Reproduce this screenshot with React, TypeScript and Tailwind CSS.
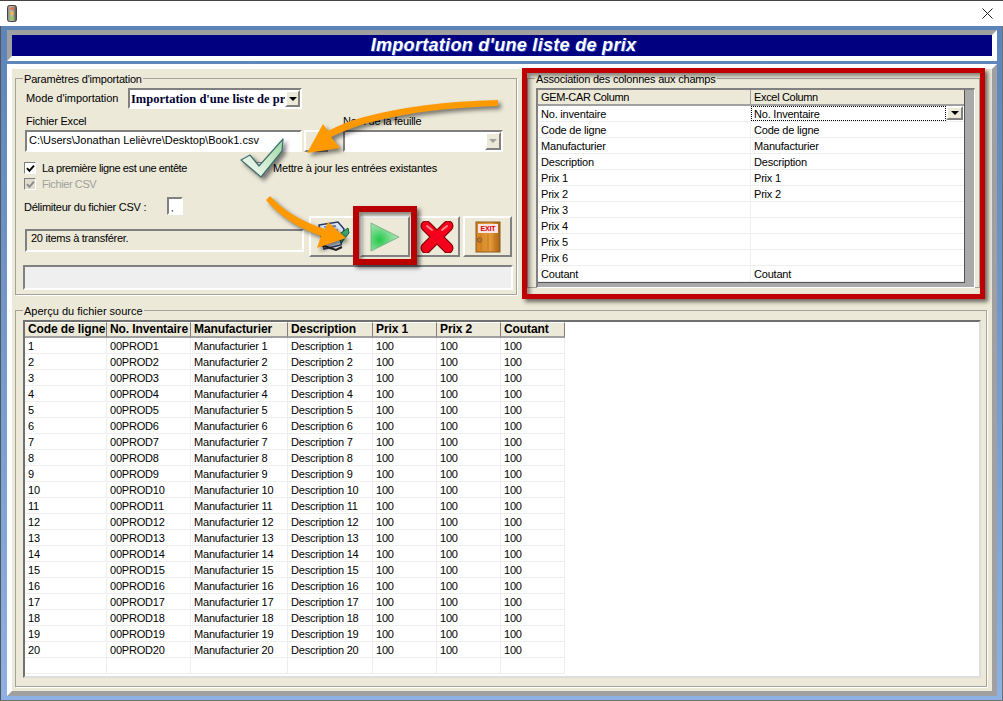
import React from "react";

const sunken = "border-2 border-t-[#808080] border-l-[#808080] border-r-white border-b-white";
const raised = "border-2 border-t-white border-l-white border-r-[#808080] border-b-[#808080]";

function Legend({ children, left }: { children: React.ReactNode; left: string }) {
  return <span className={`absolute -top-[7px] bg-[#ece9d8] px-[1px] leading-[14px] ${left}`}>{children}</span>;
}

function Check({ disabled }: { disabled?: boolean }) {
  return (
    <span className={`flex h-[12px] w-[12px] shrink-0 items-center justify-center border border-t-[#808080] border-l-[#808080] border-r-white border-b-white ${disabled ? "bg-[#e0ddd0]" : "bg-white"}`}>
      <svg width="9" height="9" viewBox="0 0 9 9">
        <path d="M1 4.2 L3.4 6.8 L8 1.6" fill="none" stroke={disabled ? "#8a8a8a" : "#000"} strokeWidth="1.9" />
      </svg>
    </span>
  );
}

function DropBtn({ disabled, cls }: { disabled?: boolean; cls: string }) {
  return (
    <span className={`flex shrink-0 items-center justify-center bg-[#ece9d8] ${raised} ${cls}`}>
      <svg width="8" height="4" viewBox="0 0 8 4"><path d="M0 0H8L4 4Z" fill={disabled ? "#a0a0a0" : "#000"} /></svg>
    </span>
  );
}

function IconBtn({ w, children }: { w: string; children?: React.ReactNode }) {
  return <div className={`flex h-[41px] shrink-0 items-center justify-center bg-[#ece9d8] ${raised} ${w}`}>{children}</div>;
}

const mapping = [
  ["No. inventaire", "No. Inventaire"],
  ["Code de ligne", "Code de ligne"],
  ["Manufacturier", "Manufacturier"],
  ["Description", "Description"],
  ["Prix 1", "Prix 1"],
  ["Prix 2", "Prix 2"],
  ["Prix 3", ""],
  ["Prix 4", ""],
  ["Prix 5", ""],
  ["Prix 6", ""],
  ["Coutant", "Coutant"],
];

const headers = ["Code de ligne", "No. Inventaire", "Manufacturier", "Description", "Prix 1", "Prix 2", "Coutant"];
const rows = Array.from({ length: 20 }, (_, i) => {
  const n = i + 1;
  return [`${n}`, `00PROD${n}`, `Manufacturier ${n}`, `Description ${n}`, "100", "100", "100"];
});

export default function App() {
  return (
    <div className="relative flex h-[701px] w-[1003px] flex-col overflow-hidden bg-[#6f6f6f] font-['Liberation_Sans',Arial,sans-serif] text-[11px] leading-[16px] tracking-[-0.2px] text-black">
      {/* title bar */}
      <div className="flex h-[26px] shrink-0 items-center justify-between border-t border-t-[#444] bg-white pl-[7px] pr-[10px]">
        <svg width="10" height="17" viewBox="0 0 10 17">
          <defs>
            <linearGradient id="tl" x1="0" x2="1" y1="0" y2="0">
              <stop offset="0" stopColor="#8a8a7c" />
              <stop offset="0.5" stopColor="#c5c5b8" />
              <stop offset="1" stopColor="#4c4c44" />
            </linearGradient>
          </defs>
          <rect x="0.5" y="0.5" width="9" height="16" rx="2" fill="url(#tl)" stroke="#444" />
          <circle cx="5" cy="3.6" r="1.9" fill="#e8705a" />
          <circle cx="5" cy="8.4" r="1.9" fill="#e6b64c" />
          <circle cx="5" cy="13.2" r="1.9" fill="#8ec85a" />
        </svg>
        <svg width="11" height="11" viewBox="0 0 11 11">
          <path d="M0.5 0.5 L10.5 10.5 M10.5 0.5 L0.5 10.5" stroke="#222" strokeWidth="1" fill="none" />
        </svg>
      </div>

      {/* blue frame */}
      <div className="mr-[1px] flex h-[674px] shrink-0 flex-col border-l border-l-[#555] bg-gradient-to-b from-[#5d84ba] to-[#8db1e4] py-[4px] pl-[6px] pr-[5px]">
        {/* heading */}
        <div className="h-[31px] shrink-0 border-[5px] border-t-[#a0a0a0] border-l-[#a0a0a0] border-r-white border-b-white bg-[#000080]">
          <div className="flex h-full items-center justify-center pb-[2px] pl-[3px] text-[18px] font-bold italic tracking-[0.3px] text-white [text-shadow:1px_1px_0_#3050c0]">
            Importation d'une liste de prix
          </div>
        </div>

        {/* main panel */}
        <div className="mt-[3px] flex h-[632px] shrink-0 flex-col border-[5px] border-t-white border-l-white border-r-[#a0a0a0] border-b-[#a0a0a0] bg-[#ece9d8] pb-[4px] pl-[3px] pr-[5px] pt-[9px]">
          <div className="flex h-[217px] shrink-0 items-start gap-[10px]">
            {/* Paramètres */}
            <div className="relative flex h-[217px] w-[502px] shrink-0 flex-col border border-[#a3a39a] pl-[9px] pt-[9px] shadow-[1px_1px_0_#fff]">
              <Legend left="left-[7px]">Paramètres d'importation</Legend>
              <div className="flex h-[21px] items-center">
                <span className="w-[103px] shrink-0 -translate-y-[1px] pl-[1px] tracking-[-0.05px]">Mode d'importation</span>
                <div className={`flex h-[21px] w-[174px] shrink-0 items-center bg-white pl-[1px] ${sunken}`}>
                  <span className="w-[154px] shrink-0 whitespace-nowrap font-['Liberation_Serif',serif] text-[12.5px] font-bold tracking-normal text-[#000030]">Importation d'une liste de pr</span>
                  <DropBtn cls="h-[17px] w-[15px]" />
                </div>
              </div>
              <div className="mt-[5px] flex h-[14px] items-center leading-[14px]">
                <span className="w-[318px] shrink-0 pl-[1px]">Fichier Excel</span>
                <span>Nom de la feuille</span>
              </div>
              <div className="mt-[2px] flex h-[22px] items-center">
                <div className={`flex h-[22px] w-[277px] shrink-0 items-start bg-white pl-[2px] tracking-normal ${sunken}`}>C:\Users\Jonathan Lelièvre\Desktop\Book1.csv</div>
                <div className={`ml-[2px] h-[22px] w-[24px] shrink-0 bg-[#ece9d8] ${raised}`} />
                <div className={`ml-[15px] flex h-[22px] w-[160px] shrink-0 items-center justify-end bg-white ${sunken}`}>
                  <DropBtn disabled cls="h-[18px] w-[16px]" />
                </div>
              </div>
              <div className="-ml-[1px] mt-[8px] flex h-[16px] items-center">
                <Check />
                <span className="ml-[6px] w-[213px] shrink-0 tracking-[-0.4px]">La première ligne est une entête</span>
                <Check />
                <span className="ml-[6px]">Mettre à jour les entrées existantes</span>
              </div>
              <div className="-ml-[1px] flex h-[16px] items-center text-[#a0a09a]">
                <Check disabled />
                <span className="ml-[6px] tracking-[-0.4px]">Fichier CSV</span>
              </div>
              <div className="-ml-[1px] mt-[5px] flex h-[18px] items-center">
                <span className="w-[143px] shrink-0 translate-y-[1px] tracking-[-0.25px]">Délimiteur du fichier CSV :</span>
                <div className={`flex h-[18px] w-[16px] items-end bg-white pl-[2px] text-[9px] leading-[10px] ${sunken}`}>,</div>
              </div>
              <div className="mt-[1px] flex h-[41px] items-start">
                <div className={`mt-[13px] h-[23px] w-[279px] shrink-0 pl-[4px] leading-[15px] tracking-[-0.27px] ${sunken}`}>20 items à transférer.</div>
                <div className="ml-[5px] flex gap-[3px]">
                  <IconBtn w="w-[48px]">
                    <svg width="34" height="32" viewBox="0 0 34 32">
                      <path d="M3 4 L22 1 L28 8 L25 24 L8 28 Z" fill="#dfe9f7" stroke="#2a3a6a" strokeWidth="1.5" />
                      <path d="M8 6 L20 5 M8 10 L22 9 M9 14 L20 13" stroke="#5a7ab8" strokeWidth="1.5" />
                      <path d="M22 14 L32 7 L33 12 L25 22 Z" fill="#3fa66a" stroke="#1c5c3a" />
                      <path d="M5 24 L20 29 L26 26" fill="none" stroke="#222" strokeWidth="2" />
                    </svg>
                  </IconBtn>
                  <IconBtn w="w-[50px]">
                    <svg width="30" height="30" viewBox="0 0 30 30">
                      <defs>
                        <radialGradient id="pl" cx="0.3" cy="0.6" r="0.75">
                          <stop offset="0" stopColor="#22c94a" />
                          <stop offset="0.55" stopColor="#7fdc92" />
                          <stop offset="1" stopColor="#b8e8c0" />
                        </radialGradient>
                      </defs>
                      <path d="M1 1 L29 15 L1 29 Z" fill="url(#pl)" stroke="#6ea87c" strokeWidth="0.8" />
                    </svg>
                  </IconBtn>
                  <IconBtn w="w-[47px]">
                    <svg width="34" height="32" viewBox="0 0 34 32">
                      <path d="M6 5 L28 27 M28 5 L6 27" stroke="#7a0000" strokeWidth="11" strokeLinecap="round" />
                      <path d="M6 5 L28 27 M28 5 L6 27" stroke="#f4001c" strokeWidth="9" strokeLinecap="round" />
                      <path d="M7 5 L12 9 M27 5 L22 9" stroke="#ff8a8a" strokeWidth="2" strokeLinecap="round" />
                    </svg>
                  </IconBtn>
                  <IconBtn w="w-[49px]">
                    <svg width="26" height="32" viewBox="0 0 26 32">
                      <defs>
                        <linearGradient id="dr" x1="0" x2="1" y1="0" y2="0">
                          <stop offset="0" stopColor="#d4831f" />
                          <stop offset="0.6" stopColor="#e39a38" />
                          <stop offset="1" stopColor="#a8620f" />
                        </linearGradient>
                      </defs>
                      <rect x="1" y="1" width="24" height="30" fill="url(#dr)" stroke="#8a5a20" />
                      <path d="M6 13 V29 M13 13 V29 M20 13 V29" stroke="#c07a28" strokeWidth="1" />
                      <rect x="3" y="3" width="20" height="9" fill="#f8e4e4" />
                      <text x="13" y="10" textAnchor="middle" fontSize="7" fontWeight="700" fill="#d80000">EXIT</text>
                      <circle cx="4.5" cy="19" r="2.3" fill="#b87a3a" stroke="#7a4a18" strokeWidth="0.7" />
                    </svg>
                  </IconBtn>
                </div>
              </div>
              <div className={`-ml-[2px] mt-[8px] h-[25px] w-[490px] shrink-0 bg-[#efefef] ${sunken}`} />
            </div>

            {/* Association */}
            <div className="relative h-[210px] w-[453px] shrink-0 border border-[#a3a39a] pl-[8px] pt-[9px]">
              <Legend left="left-[7px]">Association des colonnes aux champs</Legend>
              <div className="h-[200px] w-[439px] border border-l-2 border-t-2 border-t-[#808080] border-l-[#808080] border-r-white border-b-white bg-[#aaaaaa]">
                <div className="grid w-[427px] grid-cols-[213px_213px] border-b border-r border-[#555] bg-white">
                  <div className="h-[16px] border-b-2 border-r border-b-[#a0a0a0] border-r-[#a0a0a0] bg-[#ece9d8] pl-[3px] leading-[15px] tracking-[-0.35px]">GEM-CAR Column</div>
                  <div className="h-[16px] border-b-2 border-b-[#a0a0a0] bg-[#ece9d8] pl-[3px] leading-[15px] tracking-[-0.33px]">Excel Column</div>
                  {mapping.map(([a, b], i) => (
                    <React.Fragment key={a}>
                      <div className="h-[16px] whitespace-nowrap border-b border-r border-[#eeeeee] pl-[3px]">{a}</div>
                      {i === 0 ? (
                        <div className="flex h-[16px] items-start border-b border-[#eeeeee]">
                          <span className="h-[15px] w-[195px] shrink-0 border border-dotted border-black pl-[2px] leading-[14px]">{b}</span>
                          <DropBtn cls="h-[14px] w-[17px]" />
                        </div>
                      ) : (
                        <div className="h-[16px] whitespace-nowrap border-b border-[#eeeeee] pl-[3px]">{b}</div>
                      )}
                    </React.Fragment>
                  ))}
                </div>
              </div>
            </div>
          </div>

          {/* Aperçu */}
          <div className="relative mt-[15px] h-[377px] shrink-0 border border-[#a3a39a] pl-[7px] pt-[9px] shadow-[1px_1px_0_#fff]">
            <Legend left="left-[7px]"><span className="tracking-normal">Aperçu du fichier source</span></Legend>
            <div className="h-[358px] w-[958px] border-2 border-t-[#707070] border-l-[#707070] border-r-[#dddddd] border-b-[#dddddd] bg-white">
              <div className="grid w-[540px] grid-cols-[82px_84px_97px_85px_64px_64px_64px]">
                {headers.map((h) => (
                  <div key={h} className="h-[16px] overflow-hidden whitespace-nowrap border-b-2 border-r border-t border-b-[#a0a0a0] border-r-[#808080] border-t-white bg-[#ece9d8] pl-[3px] text-[12px] font-bold leading-[13px] tracking-[-0.1px]">{h}</div>
                ))}
                {rows.map((r) =>
                  r.map((c, j) => (
                    <div key={r[0] + j} className="h-[16px] whitespace-nowrap border-b border-r border-[#eeeeee] pl-[3px]">{c}</div>
                  ))
                )}
                {headers.map((h) => (
                  <div key={"e" + h} className="h-[16px] border-b border-r border-[#eeeeee]" />
                ))}
              </div>
            </div>
          </div>
        </div>
      </div>

      {/* annotations drawn over the window */}
      <div className="pointer-events-none absolute left-[522px] top-[68px] h-[231px] w-[463px] border-[5px] border-[#c00000] shadow-[3px_3px_4px_rgba(0,0,0,0.55),inset_3px_3px_4px_rgba(0,0,0,0.45)]" />
      <div className="pointer-events-none absolute left-[353px] top-[206px] h-[59px] w-[64px] border-[6px] border-[#b80000] shadow-[3px_3px_4px_rgba(0,0,0,0.55),inset_3px_3px_4px_rgba(0,0,0,0.45)]" />
      <svg className="pointer-events-none absolute left-0 top-0 drop-shadow-[3px_3px_2px_rgba(0,0,0,0.5)]" width="1003" height="701" viewBox="0 0 1003 701">
        <defs>
          <linearGradient id="ck" x1="0" x2="1" y1="1" y2="0">
            <stop offset="0" stopColor="#ffffff" />
            <stop offset="0.5" stopColor="#cfeccd" />
            <stop offset="1" stopColor="#9ad6a0" />
          </linearGradient>
        </defs>
        <path d="M241 160 L250 155 L259 166 L283 139 L282 151 L261 177 Z" fill="url(#ck)" stroke="#3f6f70" strokeWidth="1.2" strokeLinejoin="round" />
        <path d="M498 106 Q420 108 364 124 Q345 130 331 137 L340 148 L307 153 L323 124 L328 131 Q345 122 364 117 Q420 102 498 100 Z" fill="#ff9900" />
        <path d="M270 196 Q290 218 325 229 L328 222 L346 238 L317 248 L321 236 Q286 224 266 200 Z" fill="#ff9900" />
      </svg>
    </div>
  );
}
